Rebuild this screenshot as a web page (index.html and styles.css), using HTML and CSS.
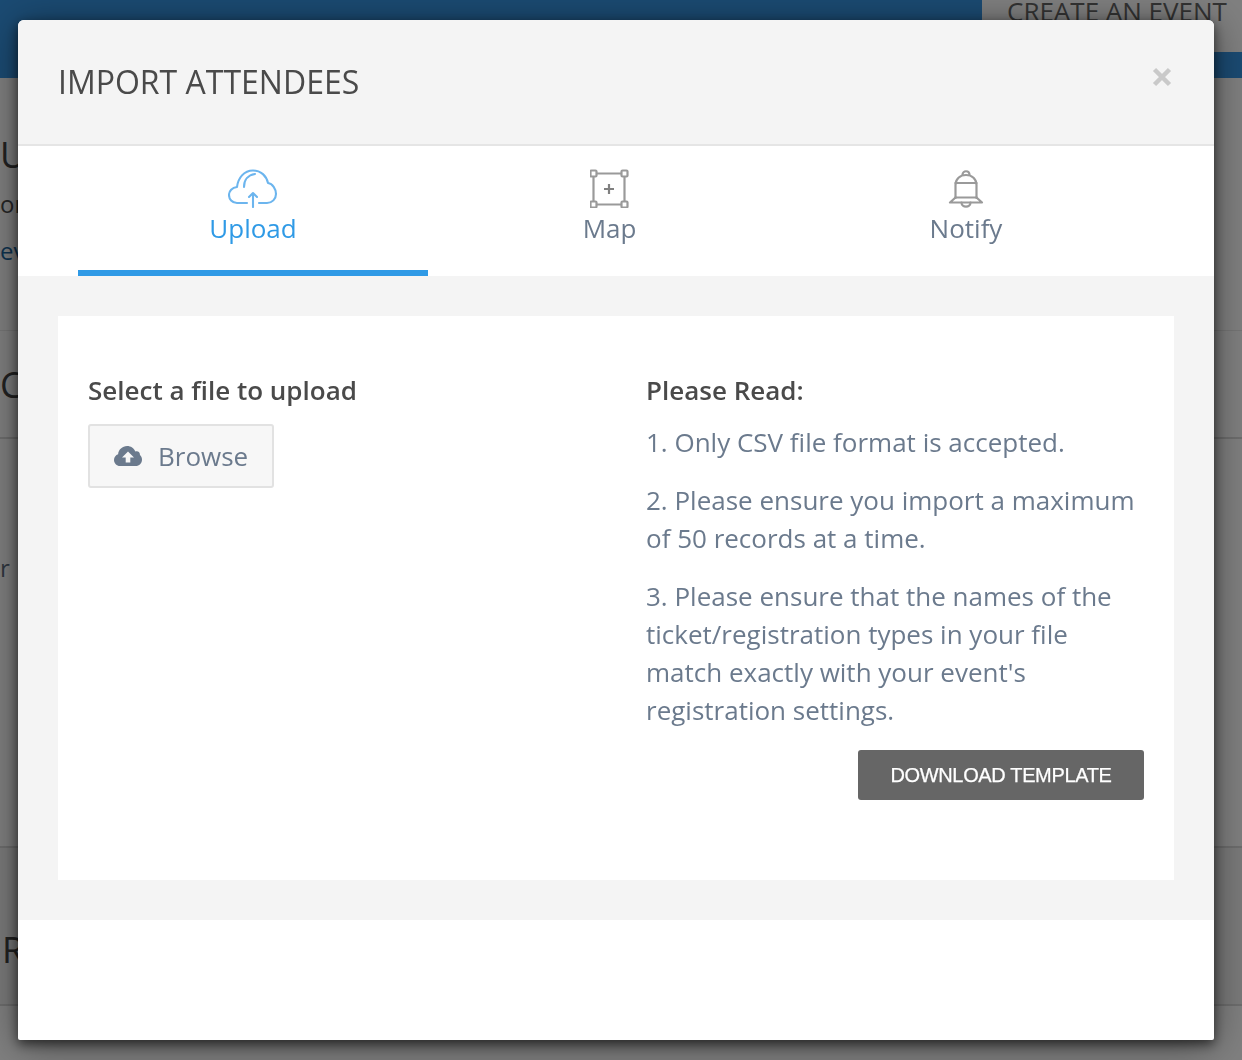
FILE: index.html
```html
<!DOCTYPE html>
<html lang="en">
<head>
<meta charset="utf-8">
<title>Import attendees</title>
<link rel="stylesheet" href="styles.css">
</head>
<body>
<div class="page">
  <header class="topbar">
    <div class="create-btn"><span>CREATE AN EVENT</span></div>
  </header>
  <section class="bg-section bg-intro">
    <div class="bg-title">Upload</div>
    <div class="bg-sub">or</div>
    <div class="bg-link">ev</div>
  </section>
  <section class="bg-section bg-c">
    <div class="bg-title">C</div>
  </section>
  <section class="bg-section bg-r">
    <div class="bg-small">r l</div>
  </section>
  <section class="bg-section bg-last">
    <div class="bg-title">R</div>
  </section>
</div>

<div class="modal">
  <div class="modal-head">
    <h1>IMPORT ATTENDEES</h1>
    <svg class="close" viewBox="0 0 20 20" aria-label="Close"><path d="M2.5 2.5l15 15M17.5 2.5l-15 15"/></svg>
  </div>
  <nav class="tabs">
    <div class="tab active">
      <svg class="tab-icon" viewBox="0 0 50 40"><g fill="none" stroke="#6cb5ee" stroke-width="2.100" stroke-linecap="round" stroke-linejoin="round"><path d="M19 35H9C4 35 1 31 1 27C1 23 4 19.500 9 19C10 10 16 2.500 25 2.500C33 2.500 38.500 8 40 15C44.500 15.500 48 21 48 26C48 31 44 35 39 35H31"/><path d="M16 19C16 12 20 7 27 6"/><path d="M25 39V25M21 29L25 25L29 29"/></g></svg>
      <span class="tab-label">Upload</span>
    </div>
    <div class="tab">
      <svg class="tab-icon" viewBox="0 0 40 40"><g transform="translate(-1 1)" fill="none" stroke="#9a9a9a" stroke-width="2.200"><path d="M6 4.500H34M6 35.500H34M4.500 6V34M35.500 6V34"/><rect x="1.500" y="1.500" width="6" height="6" rx="1" fill="#fff"/><rect x="32.500" y="1.500" width="6" height="6" rx="1" fill="#fff"/><rect x="1.500" y="32.500" width="6" height="6" rx="1" fill="#fff"/><rect x="32.500" y="32.500" width="6" height="6" rx="1" fill="#fff"/><path d="M20 15V25M15 20H25" stroke="#808080"/></g></svg>
      <span class="tab-label">Map</span>
    </div>
    <div class="tab">
      <svg class="tab-icon" viewBox="0 0 40 40"><g fill="none" stroke="#9a9a9a" stroke-width="2.200" stroke-linejoin="round" stroke-linecap="round"><path d="M16.500 7C16.500 2 23.500 2 23.500 7"/><path d="M9.500 30V17C9.500 11 14 7 20 7C26 7 30.500 11 30.500 17V30"/><path d="M9.500 15H30.500M9.500 29.500H30.500"/><path d="M9.500 29.500L4 34.500H36L30.500 29.500"/><path d="M15.500 34.500C15.500 40 24.500 40 24.500 34.500"/></g></svg>
      <span class="tab-label">Notify</span>
    </div>
  </nav>
  <div class="modal-body">
    <div class="card">
      <div class="col">
        <h2>Select a file to upload</h2>
        <button class="browse" type="button">
          <svg class="browse-icon" viewBox="0 0 28 20"><path fill="#6b7a8d" fill-rule="evenodd" d="M6 20C2.700 20 0 17.300 0 14C0 11.300 1.700 9.100 4.100 8.300C4.500 3.600 8.400 0 13.100 0C16.800 0 20 2.200 21.300 5.500C21.800 5.400 22.200 5.300 22.600 5.300C24.800 5.300 26 7 26 9C27.200 10.100 28 11.900 28 13.700C28 17.200 25.200 20 21.700 20ZM14 5.500L8 11.500H11.700V16.500H16.300V11.500H20Z"/></svg>
          <span>Browse</span>
        </button>
      </div>
      <div class="col">
        <h2>Please Read:</h2>
        <p>1. Only CSV file format is accepted.</p>
        <p>2. Please ensure you import a maximum of 50 records at a time.</p>
        <p>3. Please ensure that the names of the ticket/registration types in your file match exactly with your event's registration settings.</p>
        <div class="actions"><button class="download" type="button">DOWNLOAD TEMPLATE</button></div>
      </div>
    </div>
  </div>
</div>
</body>
</html>
```
FILE: styles.css
```css
* { box-sizing: border-box; }
html, body { margin: 0; height: 100%; }
body {
  height: 1060px;
  overflow: hidden;
  background: #808080;
  font-family: "Open Sans", sans-serif;
  color: #4a4a4a;
}
.page { height: 1060px; overflow: hidden; }
.topbar {
  height: 78px;
  background: #1b4b73;
  display: flex;
  justify-content: flex-end;
  align-items: flex-start;
}
.create-btn {
  width: 260px;
  height: 52px;
  background: #808080;
  color: #333;
  font-size: 26px;
  line-height: 22px;
  padding-left: 25px;
  white-space: nowrap;
  overflow: hidden;
}
.bg-section { overflow: hidden; white-space: nowrap; color: #222; }
.bg-intro { height: 252px; padding-top: 52px; }
.bg-c { height: 109px; padding-top: 29px; border-top: 1px solid #767676; border-bottom: 2px solid #6e6e6e; }
.bg-r { height: 407px; padding-top: 112px; }
.bg-last { height: 160px; padding-top: 77px; padding-left: 2px; border-top: 2px solid #6e6e6e; border-bottom: 2px solid #6e6e6e; background: #7b7b7b; }
.bg-title { font-size: 36px; line-height: 50px; }
.bg-sub { font-size: 24px; line-height: 34px; margin-top: 7px; color: #262626; }
.bg-link { font-size: 24px; line-height: 34px; margin-top: 13px; color: #0e3350; }
.bg-small { font-size: 24px; line-height: 34px; word-spacing: 3px; color: #30373f; }

.modal {
  position: fixed;
  left: 18px;
  top: 20px;
  width: 1196px;
  height: 1020px;
  background: #fff;
  border-radius: 6px 6px 2px 2px;
  box-shadow: 0 4px 12px rgba(0, 0, 0, .6), 0 5px 40px rgba(0, 0, 0, .45);
  overflow: hidden;
}
.modal-head {
  height: 126px;
  background: #f4f4f4;
  border-bottom: 2px solid #e5e5e5;
  padding: 0 40px;
  display: flex;
  justify-content: space-between;
  align-items: flex-start;
}
.modal-head h1 {
  margin: 38px 0 0;
  font-size: 32px;
  line-height: 48px;
  font-weight: 400;
  color: #4a4a4a;
}
.close {
  width: 20px;
  height: 20px;
  margin-top: 47px;
  margin-right: 2px;
  fill: none;
  stroke: #c9c9c9;
  stroke-width: 4.500;
}
.tabs {
  height: 130px;
  padding-left: 60px;
  display: flex;
  gap: 6.500px;
}
.tab {
  width: 350px;
  display: flex;
  flex-direction: column;
  align-items: center;
  padding-top: 22px;
  color: #6b7a8d;
  font-size: 26px;
  line-height: 38px;
}
.tab.active { color: #2f9ae6; border-bottom: 6px solid #2f9ae6; }
.tab-icon { width: 40px; height: 40px; display: block; }
.tab-label { margin-top: 1px; }
.tab.active .tab-icon { width: 50px; }
.modal-body {
  height: 644px;
  background: #f4f4f4;
  padding: 40px;
}
.card {
  height: 564px;
  background: #fff;
  display: grid;
  grid-template-columns: 1fr 1fr;
  padding-top: 55px;
}
.col { padding: 0 30px; }
.col h2 {
  margin: 0 0 14px;
  font-size: 26px;
  line-height: 38px;
  font-weight: 600;
  color: #4a4a4a;
}
.col h2 + .browse { margin-top: 15px; }
.col p {
  margin: 0 0 20px;
  font-size: 26px;
  line-height: 38px;
  color: #6b7a8d;
}
.browse {
  width: 186px;
  height: 64px;
  display: flex;
  align-items: center;
  gap: 16px;
  padding: 0 24px;
  background: #f7f7f7;
  border: 2px solid #e2e2e2;
  border-radius: 3px;
  font-family: inherit;
  font-size: 26px;
  color: #6b7a8d;
}
.browse-icon { width: 28px; height: 20px; flex: none; }
.actions { display: flex; justify-content: flex-end; margin-top: 21px; }
.download {
  width: 286px;
  height: 50px;
  background: #666;
  border: 0;
  border-radius: 3px;
  color: #fff;
  font-family: "Liberation Sans", sans-serif;
  font-size: 20px;
  letter-spacing: -.35px;
  -webkit-text-stroke: .25px #fff;
  padding: 0;
}
```
